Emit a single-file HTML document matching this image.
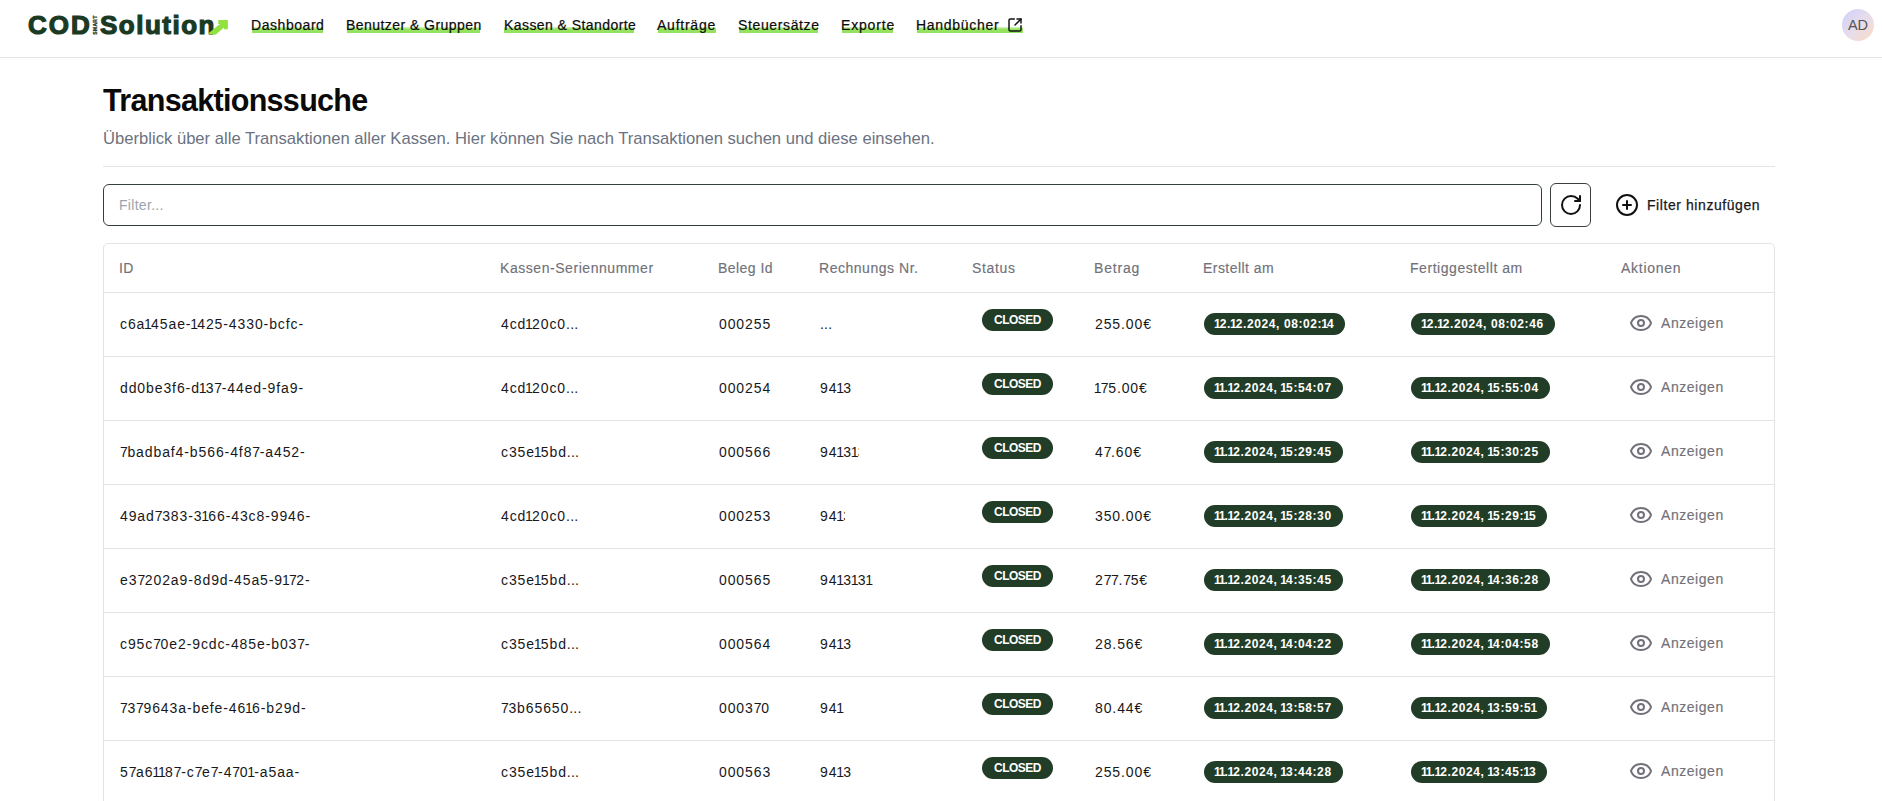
<!DOCTYPE html>
<html><head><meta charset="utf-8">
<title>Transaktionssuche</title>
<style>
*{box-sizing:border-box;margin:0;padding:0}
html,body{width:1882px;height:801px;overflow:hidden;background:#fff;font-family:"Liberation Sans",sans-serif;color:#111}
.hdr{position:absolute;left:0;top:0;width:1882px;height:58px;border-bottom:1px solid #e4e4e7}
.lg{position:absolute;font-weight:bold;color:#1b3a24;white-space:nowrap;-webkit-text-stroke:1.2px #1b3a24}
.nav a{position:absolute;z-index:2;top:16px;font-size:14px;letter-spacing:0.55px;color:#0a0a0a;-webkit-text-stroke:0.2px #0a0a0a;text-decoration:none;white-space:nowrap;line-height:18px}
.hl1{position:absolute;top:27px;height:6px;background:linear-gradient(#cff1b6 0 1px,#aae97f 1px 2px,#94e25f 2px 6px)}
.avatar{position:absolute;left:1842px;top:9px;width:32px;height:32px;border-radius:50%;background:linear-gradient(135deg,#d0d0fb 0%,#e6dcec 50%,#fbdcc4 100%);font-size:14.5px;color:#555;text-align:center;line-height:32px}
h1{position:absolute;left:103px;top:82px;font-size:30.5px;font-weight:bold;line-height:36px;color:#0a0a0a;letter-spacing:-0.69px;white-space:nowrap}
.sub{position:absolute;left:103px;top:129px;font-size:16.6px;line-height:20px;color:#6b7280;letter-spacing:0.012px;white-space:nowrap}
.sep{position:absolute;left:103px;top:166px;width:1672px;height:1px;background:#e4e4e7}
.inp{position:absolute;left:103px;top:184px;width:1439px;height:42px;border:1px solid #344038;border-radius:6px}
.inp span{position:absolute;left:15px;top:12px;font-size:14px;color:#9ca3af;line-height:16px;letter-spacing:0.3px}
.rbtn{position:absolute;left:1550px;top:183px;width:41px;height:44px;border:1px solid #3a413c;border-radius:6px}
.card{position:absolute;left:103px;top:243px;width:1672px;height:600px;border:1px solid #e4e4e7;border-radius:5px}
.hl{position:absolute;left:104px;width:1670px;height:1px;background:#e4e4e7}
.th{position:absolute;top:260px;font-size:14px;line-height:16px;color:#71717a;white-space:nowrap;letter-spacing:0.45px;-webkit-text-stroke:0.15px #71717a}
.td{position:absolute;font-size:14px;line-height:16px;color:#18181b;white-space:nowrap;letter-spacing:0.9px}
.td .o{letter-spacing:0;margin-left:-1.2px;margin-right:-0.8px}
.td .s{letter-spacing:-0.4px}
.td .d{letter-spacing:0.2px}
.badge{position:absolute;height:22px;border-radius:11px;background:#213d27;color:#fff;font-size:12px;font-weight:bold;line-height:22px;white-space:nowrap}
.bc{width:71px;text-align:center;letter-spacing:-0.5px}
.bd{padding:0 11px;letter-spacing:0.6px}
.bd .o{letter-spacing:0;margin-left:-1px;margin-right:-0.95px}
.eye{position:absolute;width:24px;height:24px}
.act{position:absolute;font-size:14px;color:#71717a;line-height:16px;white-space:nowrap;letter-spacing:0.55px;-webkit-text-stroke:0.15px #71717a}
.addf{position:absolute;left:1647px;top:197px;font-size:14px;line-height:16px;color:#18181b;letter-spacing:0.57px;-webkit-text-stroke:0.25px #18181b;white-space:nowrap}
</style></head><body>
<div class="hdr">
  <div class="lg" style="left:28px;top:10px;font-size:26px;line-height:30px;letter-spacing:2px">COD</div>
  <div class="lg" style="left:84.8px;top:21.8px;font-size:5px;line-height:6px;-webkit-text-stroke:0.3px #1b3a24;transform:rotate(-90deg);transform-origin:center;letter-spacing:0.3px">SMART</div>
  <div class="lg" style="left:100px;top:10px;font-size:26px;line-height:30px;letter-spacing:1.5px">Solution</div>
  <svg style="position:absolute;left:206px;top:18px" width="24" height="18" viewBox="0 0 24 18"><polygon fill="#91e23e" points="1.8,15.8 14,5.9 12.3,5.9 12.3,2.1 21.8,2.1 21.8,11.3 18,11.3 18,9.5 9.6,16.7" /></svg>
  <div class="nav">
    <div class="hl1" style="left:252px;width:71px"></div><a style="left:251px">Dashboard</a>
    <div class="hl1" style="left:347px;width:133px"></div><a style="left:346px;letter-spacing:0.45px">Benutzer &amp; Gruppen</a>
    <div class="hl1" style="left:504px;width:130px"></div><a style="left:504px;letter-spacing:0.43px">Kassen &amp; Standorte</a>
    <div class="hl1" style="left:658px;width:58px"></div><a style="left:657px;letter-spacing:0.76px">Aufträge</a>
    <div class="hl1" style="left:739px;width:79px"></div><a style="left:738px;letter-spacing:0.63px">Steuersätze</a>
    <div class="hl1" style="left:842px;width:51px"></div><a style="left:841px;letter-spacing:0.82px">Exporte</a>
    <div class="hl1" style="left:917px;width:106px"></div><a style="left:916px;letter-spacing:0.72px">Handbücher</a>
    <svg style="position:absolute;left:1007px;top:17px" width="16" height="16" viewBox="0 0 24 24" fill="none" stroke="#111" stroke-width="2.2" stroke-linecap="round" stroke-linejoin="round"><path d="M21 13v6a2 2 0 0 1-2 2H5a2 2 0 0 1-2-2V5a2 2 0 0 1 2-2h6"/><path d="m21 3-9 9"/><path d="M15 3h6v6"/></svg>
  </div>
  <div class="avatar">AD</div>
</div>
<h1>Transaktionssuche</h1>
<div class="sub">Überblick über alle Transaktionen aller Kassen. Hier können Sie nach Transaktionen suchen und diese einsehen.</div>
<div class="sep"></div>
<div class="inp"><span>Filter...</span></div>
<div class="rbtn"><svg style="position:absolute;left:8px;top:9px" width="24" height="24" viewBox="0 0 24 24" fill="none" stroke="#111" stroke-width="2" stroke-linecap="round" stroke-linejoin="round"><path d="M21 12a9 9 0 1 1-9-9c2.52 0 4.93 1 6.74 2.74L21 8"/><path d="M21 3v5h-5"/></svg></div>
<svg style="position:absolute;left:1615px;top:193px" width="24" height="24" viewBox="0 0 24 24" fill="none" stroke="#111" stroke-width="2" stroke-linecap="round" stroke-linejoin="round"><circle cx="12" cy="12" r="10"/><path d="M8 12h8"/><path d="M12 8v8"/></svg>
<div class="addf">Filter hinzufügen</div>
<div class="card"></div>

<div class="th" style="left:119px;letter-spacing:0.45px">ID</div>
<div class="th" style="left:500px;letter-spacing:0.55px">Kassen-Seriennummer</div>
<div class="th" style="left:718px;letter-spacing:0.45px">Beleg Id</div>
<div class="th" style="left:819px;letter-spacing:0.53px">Rechnungs Nr.</div>
<div class="th" style="left:972px;letter-spacing:0.65px">Status</div>
<div class="th" style="left:1094px;letter-spacing:0.8px">Betrag</div>
<div class="th" style="left:1203px;letter-spacing:0.45px">Erstellt am</div>
<div class="th" style="left:1410px;letter-spacing:0.55px">Fertiggestellt am</div>
<div class="th" style="left:1621px;letter-spacing:0.73px">Aktionen</div>
<div class="hl" style="top:292px"></div>
<div class="td tid" style="left:120px;top:316px">c6a<span class="o">1</span>45ae-<span class="o">1</span>425-4330-bcfc-</div>
<div class="td" style="left:501px;top:316px">4cd<span class="o">1</span>20c0<span class="d">...</span></div>
<div class="td" style="left:719px;top:316px">000255</div>
<div class="td" style="left:820px;top:316px"><span class="d">...</span></div>
<div class="badge bc" style="left:982px;top:309px">CLOSED</div>
<div class="td" style="left:1095px;top:316px">255.00€</div>
<div class="badge bd" style="left:1204px;top:313px"><span class="o">1</span>2.<span class="o">1</span>2.2024, 08:02:<span class="o">1</span>4</div>
<div class="badge bd" style="left:1411px;top:313px"><span class="o">1</span>2.<span class="o">1</span>2.2024, 08:02:46</div>
<div class="eye" style="left:1629px;top:311px"><svg width="24" height="24" viewBox="0 0 24 24" fill="none" stroke="#71717a" stroke-width="2" stroke-linecap="round" stroke-linejoin="round"><path d="M2.06 12.35a1 1 0 0 1 0-.7 10.75 10.75 0 0 1 19.88 0 1 1 0 0 1 0 .7 10.75 10.75 0 0 1-19.88 0"/><circle cx="12" cy="12" r="3"/></svg></div>
<div class="act" style="left:1661px;top:315px">Anzeigen</div>
<div class="hl" style="top:356px"></div>
<div class="td tid" style="left:120px;top:380px">dd0be3f6-d<span class="o">1</span>3<span class="s">7</span>-44ed-9fa9-</div>
<div class="td" style="left:501px;top:380px">4cd<span class="o">1</span>20c0<span class="d">...</span></div>
<div class="td" style="left:719px;top:380px">000254</div>
<div class="td" style="left:820px;top:380px">94<span class="o">1</span>3</div>
<div class="badge bc" style="left:982px;top:373px">CLOSED</div>
<div class="td" style="left:1095px;top:380px"><span class="o">1</span><span class="s">7</span>5.00€</div>
<div class="badge bd" style="left:1204px;top:377px"><span class="o">1</span><span class="o">1</span>.<span class="o">1</span>2.2024, <span class="o">1</span>5:54:0<span class="s">7</span></div>
<div class="badge bd" style="left:1411px;top:377px"><span class="o">1</span><span class="o">1</span>.<span class="o">1</span>2.2024, <span class="o">1</span>5:55:04</div>
<div class="eye" style="left:1629px;top:375px"><svg width="24" height="24" viewBox="0 0 24 24" fill="none" stroke="#71717a" stroke-width="2" stroke-linecap="round" stroke-linejoin="round"><path d="M2.06 12.35a1 1 0 0 1 0-.7 10.75 10.75 0 0 1 19.88 0 1 1 0 0 1 0 .7 10.75 10.75 0 0 1-19.88 0"/><circle cx="12" cy="12" r="3"/></svg></div>
<div class="act" style="left:1661px;top:379px">Anzeigen</div>
<div class="hl" style="top:420px"></div>
<div class="td tid" style="left:120px;top:444px"><span class="s">7</span>badbaf4-b566-4f8<span class="s">7</span>-a452-</div>
<div class="td" style="left:501px;top:444px">c35e<span class="o">1</span>5bd<span class="d">...</span></div>
<div class="td" style="left:719px;top:444px">000566</div>
<div class="td" style="left:820px;top:444px;width:39px;overflow:hidden">94<span class="o">1</span>3<span class="o">1</span>3</div>
<div class="badge bc" style="left:982px;top:437px">CLOSED</div>
<div class="td" style="left:1095px;top:444px">4<span class="s">7</span>.60€</div>
<div class="badge bd" style="left:1204px;top:441px"><span class="o">1</span><span class="o">1</span>.<span class="o">1</span>2.2024, <span class="o">1</span>5:29:45</div>
<div class="badge bd" style="left:1411px;top:441px"><span class="o">1</span><span class="o">1</span>.<span class="o">1</span>2.2024, <span class="o">1</span>5:30:25</div>
<div class="eye" style="left:1629px;top:439px"><svg width="24" height="24" viewBox="0 0 24 24" fill="none" stroke="#71717a" stroke-width="2" stroke-linecap="round" stroke-linejoin="round"><path d="M2.06 12.35a1 1 0 0 1 0-.7 10.75 10.75 0 0 1 19.88 0 1 1 0 0 1 0 .7 10.75 10.75 0 0 1-19.88 0"/><circle cx="12" cy="12" r="3"/></svg></div>
<div class="act" style="left:1661px;top:443px">Anzeigen</div>
<div class="hl" style="top:484px"></div>
<div class="td tid" style="left:120px;top:508px">49ad<span class="s">7</span>383-3<span class="o">1</span>66-43c8-9946-</div>
<div class="td" style="left:501px;top:508px">4cd<span class="o">1</span>20c0<span class="d">...</span></div>
<div class="td" style="left:719px;top:508px">000253</div>
<div class="td" style="left:820px;top:508px;width:25px;overflow:hidden">94<span class="o">1</span>3</div>
<div class="badge bc" style="left:982px;top:501px">CLOSED</div>
<div class="td" style="left:1095px;top:508px">350.00€</div>
<div class="badge bd" style="left:1204px;top:505px"><span class="o">1</span><span class="o">1</span>.<span class="o">1</span>2.2024, <span class="o">1</span>5:28:30</div>
<div class="badge bd" style="left:1411px;top:505px"><span class="o">1</span><span class="o">1</span>.<span class="o">1</span>2.2024, <span class="o">1</span>5:29:<span class="o">1</span>5</div>
<div class="eye" style="left:1629px;top:503px"><svg width="24" height="24" viewBox="0 0 24 24" fill="none" stroke="#71717a" stroke-width="2" stroke-linecap="round" stroke-linejoin="round"><path d="M2.06 12.35a1 1 0 0 1 0-.7 10.75 10.75 0 0 1 19.88 0 1 1 0 0 1 0 .7 10.75 10.75 0 0 1-19.88 0"/><circle cx="12" cy="12" r="3"/></svg></div>
<div class="act" style="left:1661px;top:507px">Anzeigen</div>
<div class="hl" style="top:548px"></div>
<div class="td tid" style="left:120px;top:572px">e3<span class="s">7</span>202a9-8d9d-45a5-9<span class="o">1</span><span class="s">7</span>2-</div>
<div class="td" style="left:501px;top:572px">c35e<span class="o">1</span>5bd<span class="d">...</span></div>
<div class="td" style="left:719px;top:572px">000565</div>
<div class="td" style="left:820px;top:572px">94<span class="o">1</span>3<span class="o">1</span>3<span class="o">1</span></div>
<div class="badge bc" style="left:982px;top:565px">CLOSED</div>
<div class="td" style="left:1095px;top:572px">2<span class="s">7</span><span class="s">7</span>.<span class="s">7</span>5€</div>
<div class="badge bd" style="left:1204px;top:569px"><span class="o">1</span><span class="o">1</span>.<span class="o">1</span>2.2024, <span class="o">1</span>4:35:45</div>
<div class="badge bd" style="left:1411px;top:569px"><span class="o">1</span><span class="o">1</span>.<span class="o">1</span>2.2024, <span class="o">1</span>4:36:28</div>
<div class="eye" style="left:1629px;top:567px"><svg width="24" height="24" viewBox="0 0 24 24" fill="none" stroke="#71717a" stroke-width="2" stroke-linecap="round" stroke-linejoin="round"><path d="M2.06 12.35a1 1 0 0 1 0-.7 10.75 10.75 0 0 1 19.88 0 1 1 0 0 1 0 .7 10.75 10.75 0 0 1-19.88 0"/><circle cx="12" cy="12" r="3"/></svg></div>
<div class="act" style="left:1661px;top:571px">Anzeigen</div>
<div class="hl" style="top:612px"></div>
<div class="td tid" style="left:120px;top:636px">c95c<span class="s">7</span>0e2-9cdc-485e-b03<span class="s">7</span>-</div>
<div class="td" style="left:501px;top:636px">c35e<span class="o">1</span>5bd<span class="d">...</span></div>
<div class="td" style="left:719px;top:636px">000564</div>
<div class="td" style="left:820px;top:636px">94<span class="o">1</span>3</div>
<div class="badge bc" style="left:982px;top:629px">CLOSED</div>
<div class="td" style="left:1095px;top:636px">28.56€</div>
<div class="badge bd" style="left:1204px;top:633px"><span class="o">1</span><span class="o">1</span>.<span class="o">1</span>2.2024, <span class="o">1</span>4:04:22</div>
<div class="badge bd" style="left:1411px;top:633px"><span class="o">1</span><span class="o">1</span>.<span class="o">1</span>2.2024, <span class="o">1</span>4:04:58</div>
<div class="eye" style="left:1629px;top:631px"><svg width="24" height="24" viewBox="0 0 24 24" fill="none" stroke="#71717a" stroke-width="2" stroke-linecap="round" stroke-linejoin="round"><path d="M2.06 12.35a1 1 0 0 1 0-.7 10.75 10.75 0 0 1 19.88 0 1 1 0 0 1 0 .7 10.75 10.75 0 0 1-19.88 0"/><circle cx="12" cy="12" r="3"/></svg></div>
<div class="act" style="left:1661px;top:635px">Anzeigen</div>
<div class="hl" style="top:676px"></div>
<div class="td tid" style="left:120px;top:700px"><span class="s">7</span>3<span class="s">7</span>9643a-befe-46<span class="o">1</span>6-b29d-</div>
<div class="td" style="left:501px;top:700px"><span class="s">7</span>3b65650<span class="d">...</span></div>
<div class="td" style="left:719px;top:700px">0003<span class="s">7</span>0</div>
<div class="td" style="left:820px;top:700px">94<span class="o">1</span></div>
<div class="badge bc" style="left:982px;top:693px">CLOSED</div>
<div class="td" style="left:1095px;top:700px">80.44€</div>
<div class="badge bd" style="left:1204px;top:697px"><span class="o">1</span><span class="o">1</span>.<span class="o">1</span>2.2024, <span class="o">1</span>3:58:5<span class="s">7</span></div>
<div class="badge bd" style="left:1411px;top:697px"><span class="o">1</span><span class="o">1</span>.<span class="o">1</span>2.2024, <span class="o">1</span>3:59:5<span class="o">1</span></div>
<div class="eye" style="left:1629px;top:695px"><svg width="24" height="24" viewBox="0 0 24 24" fill="none" stroke="#71717a" stroke-width="2" stroke-linecap="round" stroke-linejoin="round"><path d="M2.06 12.35a1 1 0 0 1 0-.7 10.75 10.75 0 0 1 19.88 0 1 1 0 0 1 0 .7 10.75 10.75 0 0 1-19.88 0"/><circle cx="12" cy="12" r="3"/></svg></div>
<div class="act" style="left:1661px;top:699px">Anzeigen</div>
<div class="hl" style="top:740px"></div>
<div class="td tid" style="left:120px;top:764px">5<span class="s">7</span>a6<span class="o">1</span><span class="o">1</span>8<span class="s">7</span>-c<span class="s">7</span>e<span class="s">7</span>-4<span class="s">7</span>0<span class="o">1</span>-a5aa-</div>
<div class="td" style="left:501px;top:764px">c35e<span class="o">1</span>5bd<span class="d">...</span></div>
<div class="td" style="left:719px;top:764px">000563</div>
<div class="td" style="left:820px;top:764px">94<span class="o">1</span>3</div>
<div class="badge bc" style="left:982px;top:757px">CLOSED</div>
<div class="td" style="left:1095px;top:764px">255.00€</div>
<div class="badge bd" style="left:1204px;top:761px"><span class="o">1</span><span class="o">1</span>.<span class="o">1</span>2.2024, <span class="o">1</span>3:44:28</div>
<div class="badge bd" style="left:1411px;top:761px"><span class="o">1</span><span class="o">1</span>.<span class="o">1</span>2.2024, <span class="o">1</span>3:45:<span class="o">1</span>3</div>
<div class="eye" style="left:1629px;top:759px"><svg width="24" height="24" viewBox="0 0 24 24" fill="none" stroke="#71717a" stroke-width="2" stroke-linecap="round" stroke-linejoin="round"><path d="M2.06 12.35a1 1 0 0 1 0-.7 10.75 10.75 0 0 1 19.88 0 1 1 0 0 1 0 .7 10.75 10.75 0 0 1-19.88 0"/><circle cx="12" cy="12" r="3"/></svg></div>
<div class="act" style="left:1661px;top:763px">Anzeigen</div>
</body></html>
